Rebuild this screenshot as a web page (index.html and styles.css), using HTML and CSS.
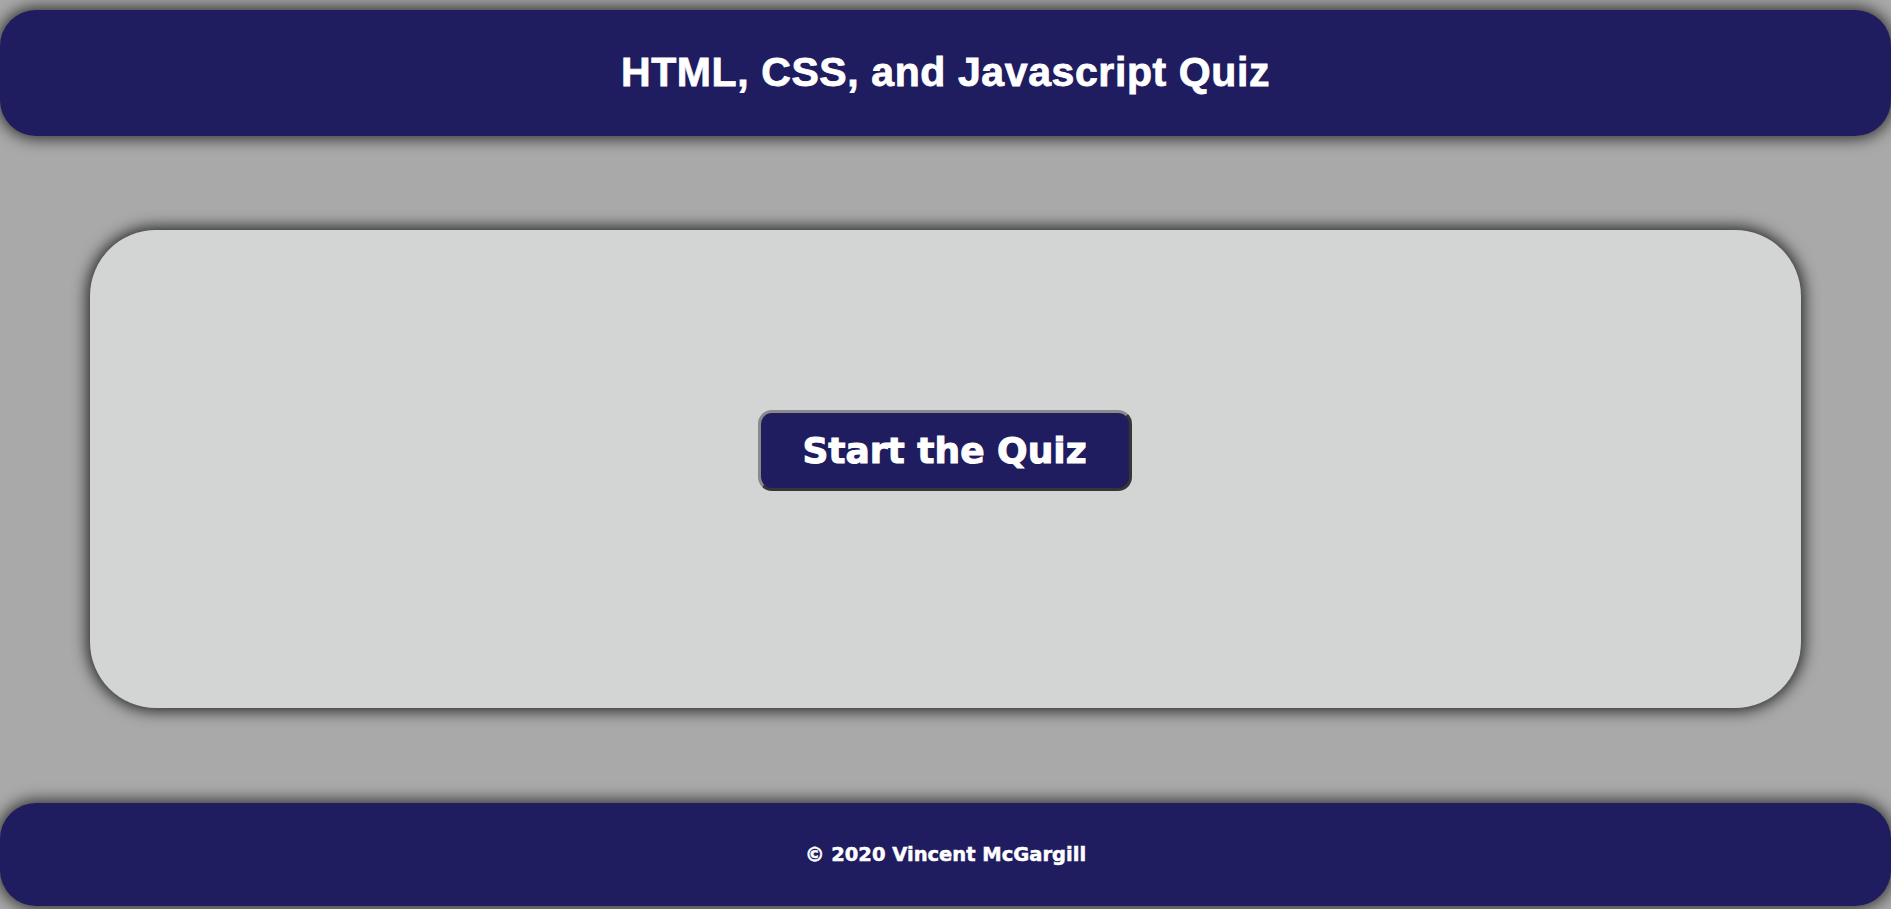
FILE: index.html
```html
<!DOCTYPE html>
<html lang="en">
<head>
<meta charset="utf-8">
<title>HTML, CSS, and Javascript Quiz</title>
<link rel="stylesheet" href="styles.css">
</head>
<body>
<header class="site-header">
  <h1 class="title">HTML, CSS, and Javascript Quiz</h1>
</header>
<main class="card">
  <button class="start-btn" type="button">Start the Quiz</button>
</main>
<footer class="site-footer">
  <p class="copy">&copy; 2020 Vincent McGargill</p>
</footer>
</body>
</html>
```

FILE: styles.css
```css
html, body {
  margin: 0;
  padding: 0;
}

body {
  background: #a9a9a9;
  font-family: "Liberation Sans", Arial, sans-serif;
  height: 909px;
  overflow: hidden;
  padding-top: 10px;
  box-sizing: border-box;
}

.site-header {
  background: #1f1d60;
  height: 126px;
  border-radius: 36px;
  box-shadow: 0 0 15px 3px #333333;
  display: flex;
  align-items: center;
  justify-content: center;
}

.title {
  margin: 0 0 2px;
  color: #ffffff;
  font-family: "Liberation Sans", Arial, sans-serif;
  font-weight: bold;
  font-size: 41px;
  letter-spacing: 0.6px;
  -webkit-text-stroke: 0.8px #ffffff;
}

.card {
  margin: 94px 90px 0;
  height: 478px;
  box-sizing: border-box;
  background: #d3d5d4;
  border-radius: 66px;
  box-shadow: 0 0 15px 3px #262626;
  display: flex;
  justify-content: center;
  align-items: flex-start;
  padding-top: 180px;
}

.start-btn {
  width: 374px;
  height: 81px;
  margin-right: 2px;
  background: #1f1d60;
  color: #ffffff;
  border: 3px outset #8a8a8a;
  border-radius: 14px;
  font-family: "DejaVu Sans", sans-serif;
  font-weight: bold;
  font-size: 36px;
  padding: 0;
  cursor: pointer;
  -webkit-text-stroke: 1px #ffffff;
}

.site-footer {
  margin-top: 95px;
  background: #1f1d60;
  height: 103px;
  border-radius: 36px;
  box-shadow: 0 0 15px 3px #333333;
  display: flex;
  align-items: center;
  justify-content: center;
}

.copy {
  margin: 0;
  color: #ffffff;
  font-family: "DejaVu Sans", sans-serif;
  font-weight: bold;
  font-size: 19.5px;
  -webkit-text-stroke: 0.5px #ffffff;
}
```
